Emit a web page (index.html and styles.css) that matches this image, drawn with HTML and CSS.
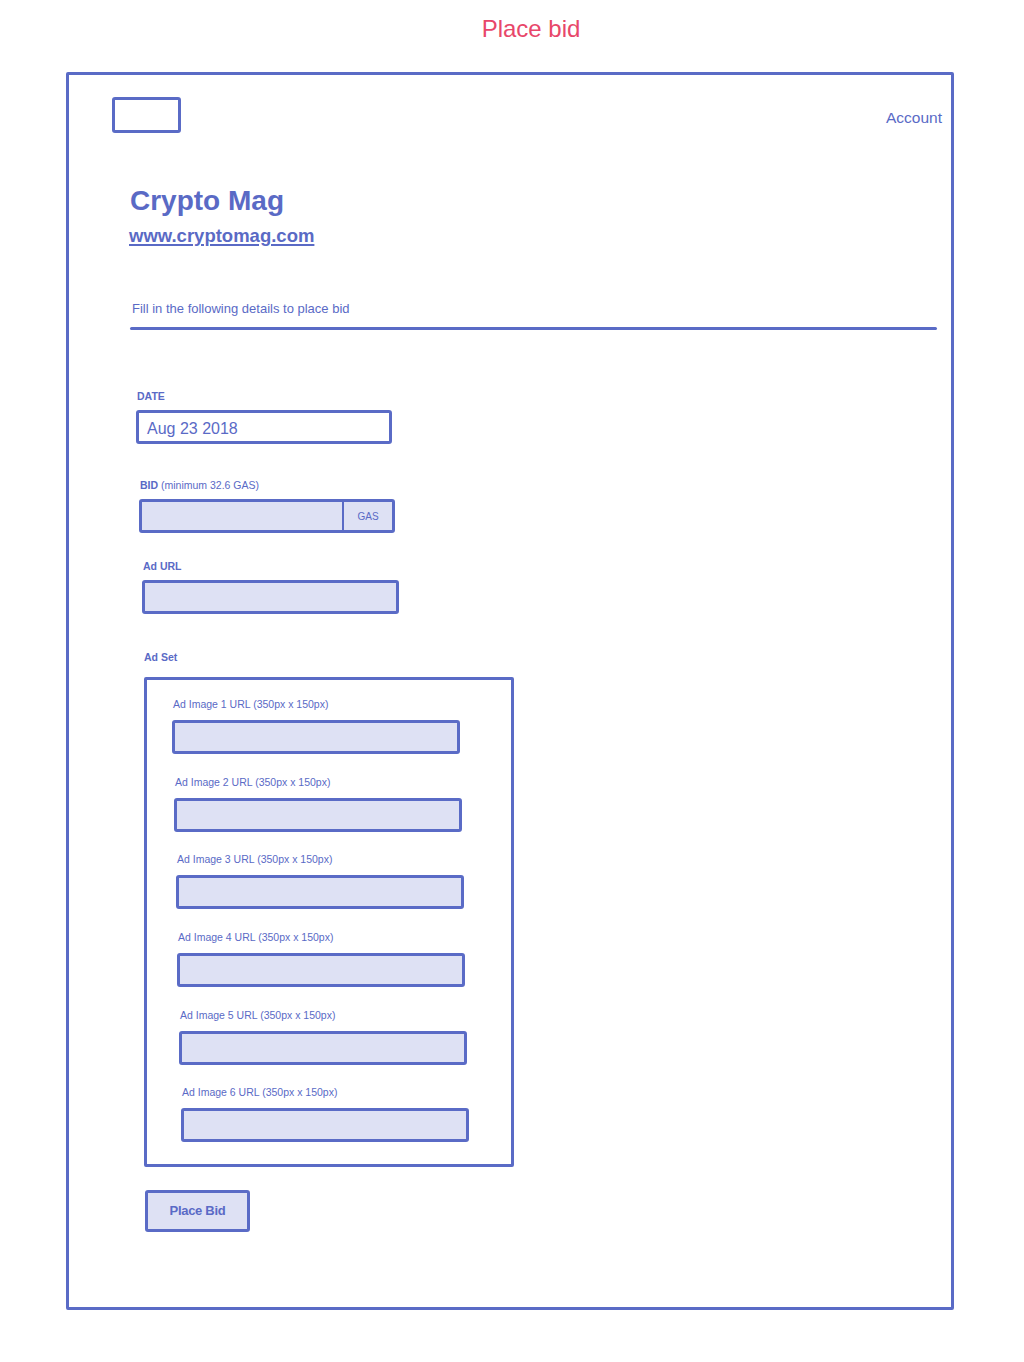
FILE: index.html
```html
<!DOCTYPE html>
<html lang="en">
<head>
<meta charset="utf-8">
<title>Place bid</title>
<link rel="stylesheet" href="styles.css">
</head>
<body>
<div class="page-title">Place bid</div>
<div class="frame">
  <div class="header">
    <div class="logo"></div>
    <a class="account">Account</a>
  </div>
  <div class="main">
    <h1 class="site-name">Crypto Mag</h1>
    <a class="site-url">www.cryptomag.com</a>
    <p class="intro">Fill in the following details to place bid</p>
    <div class="rule"></div>

    <div class="label label-date">DATE</div>
    <div class="input input-date">Aug 23 2018</div>

    <div class="label label-bid">BID <span class="hint">(minimum 32.6 GAS)</span></div>
    <div class="input input-bid">
      <div class="bid-value"></div>
      <div class="bid-unit">GAS</div>
    </div>

    <div class="label label-url">Ad URL</div>
    <div class="input input-url"></div>

    <div class="label label-set">Ad Set</div>
    <div class="adset">
      <div class="ad-field">
        <div class="ad-label">Ad Image 1 URL (350px x 150px)</div>
        <div class="input ad-input"></div>
      </div>
      <div class="ad-field">
        <div class="ad-label">Ad Image 2 URL (350px x 150px)</div>
        <div class="input ad-input"></div>
      </div>
      <div class="ad-field">
        <div class="ad-label">Ad Image 3 URL (350px x 150px)</div>
        <div class="input ad-input"></div>
      </div>
      <div class="ad-field">
        <div class="ad-label">Ad Image 4 URL (350px x 150px)</div>
        <div class="input ad-input"></div>
      </div>
      <div class="ad-field">
        <div class="ad-label">Ad Image 5 URL (350px x 150px)</div>
        <div class="input ad-input"></div>
      </div>
      <div class="ad-field">
        <div class="ad-label">Ad Image 6 URL (350px x 150px)</div>
        <div class="input ad-input"></div>
      </div>
    </div>

    <div class="button">Place Bid</div>
  </div>
</div>
</body>
</html>
```
FILE: styles.css
```css
* { box-sizing: border-box; }

html, body {
  margin: 0;
  padding: 0;
  background: #ffffff;
}

body {
  font-family: "Liberation Sans", Arial, Helvetica, sans-serif;
  color: #5a6ac6;
  width: 1024px;
  height: 1362px;
  overflow: hidden;
}

.page-title {
  padding: 15px 0 0 38px;
  height: 42px;
  line-height: 28px;
  font-size: 24px;
  text-align: center;
  color: #e8476a;
}

.frame {
  margin: 30px 0 0 66px;
  width: 888px;
  height: 1238px;
  border: 3px solid #5a6bc6;
  border-radius: 2px;
}

.header {
  display: flex;
  justify-content: space-between;
  align-items: flex-start;
  padding: 22px 9px 0 43px;
}

.logo {
  width: 69px;
  height: 36px;
  border: 3px solid #5a6bc6;
  border-radius: 3px;
}

.account {
  margin-top: 12px;
  font-size: 15.5px;
  line-height: 18px;
  color: #5a6ac6;
}

.main {
  margin-left: 61px;
  display: flex;
  flex-direction: column;
  align-items: flex-start;
}

.site-name {
  margin: 52px 0 0;
  font-size: 28px;
  line-height: 32px;
  font-weight: bold;
  color: #5a6ac5;
}

.site-url {
  margin: 8px 0 0 -1px;
  font-size: 18.5px;
  line-height: 22px;
  font-weight: bold;
  text-decoration: underline;
  text-decoration-thickness: 2px;
  text-underline-offset: 2px;
  color: #5a6ac5;
}

.intro {
  margin: 54px 0 0 2px;
  font-size: 13px;
  line-height: 16px;
}

.rule {
  margin-top: 10px;
  width: 807px;
  height: 3px;
  background: #5a6bc6;
  border-radius: 2px;
}

.label {
  font-size: 10.5px;
  line-height: 12px;
  font-weight: bold;
}

.hint {
  font-weight: normal;
}

.input {
  height: 34px;
  border: 3px solid #5a6bc6;
  border-radius: 3px;
  background: #dee1f4;
}

.label-date { margin: 60px 0 0 7px; }

.input-date {
  margin: 8px 0 0 6px;
  width: 256px;
  background: #ffffff;
  padding: 2px 0 0 8px;
  font-size: 16px;
  line-height: 28px;
}

.label-bid { margin: 35px 0 0 10px; }

.input-bid {
  margin: 8px 0 0 9px;
  width: 256px;
  display: flex;
}

.bid-value { flex: 1; }

.bid-unit {
  width: 50px;
  border-left: 2px solid #5a6bc6;
  font-size: 10px;
  line-height: 30px;
  text-align: center;
}

.label-url { margin: 27px 0 0 13px; }

.input-url {
  margin: 8px 0 0 12px;
  width: 257px;
}

.label-set { margin: 37px 0 0 14px; }

.adset {
  margin: 14px 0 0 14px;
  width: 370px;
  border: 3px solid #5a6bc6;
  border-radius: 2px;
  padding: 18px 0 22px 26px;
  display: flex;
  flex-direction: column;
  gap: 21.7px;
}

.ad-field {
  display: flex;
  flex-direction: column;
  align-items: flex-start;
}

.ad-field:nth-child(2) { margin-left: 2px; }
.ad-field:nth-child(3) { margin-left: 4px; }
.ad-field:nth-child(4) { margin-left: 5px; }
.ad-field:nth-child(5) { margin-left: 7px; }
.ad-field:nth-child(6) { margin-left: 9px; }

.ad-label {
  font-size: 10.5px;
  line-height: 12px;
}

.ad-input {
  margin: 10px 0 0 -1px;
  width: 288px;
}

.button {
  margin: 23px 0 0 15px;
  width: 105px;
  height: 42px;
  border: 3px solid #5a6bc6;
  border-radius: 3px;
  background: #dee1f4;
  font-size: 13px;
  font-weight: bold;
  letter-spacing: -0.3px;
  line-height: 36px;
  text-align: center;
}
```
